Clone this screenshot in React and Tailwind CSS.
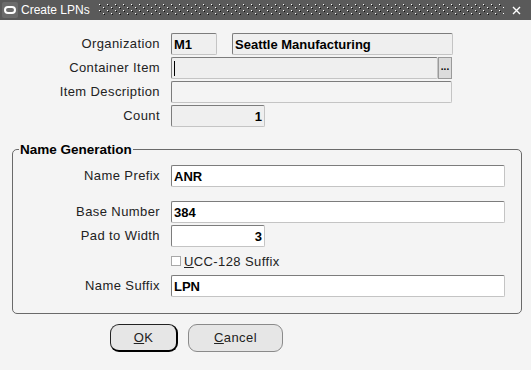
import React from 'react';

const font = { fontFamily: '"Liberation Sans", Arial, sans-serif' };

function Field({ value = '', width, bg = 'bg-[#efefef]', align = 'text-left', caret = false, children }) {
  return (
    <div
      className={`h-[22px] ${width} ${bg} ${align} flex items-center border border-t-[#7c7c7c] border-l-[#7c7c7c] border-r-[#c4c4c4] border-b-[#c4c4c4] rounded-[2px] px-[2px] text-[13px] font-bold text-black leading-none ${align === 'text-right' ? 'justify-end' : ''}`}
    >
      {caret && <span className="w-px h-[15px] bg-black" />}
      {value}
      {children}
    </div>
  );
}

function Row({ label, labelW = 'w-[160px]', children, className = '' }) {
  return (
    <div className={`flex items-center ${className}`}>
      <div className={`${labelW} text-right text-[13px] tracking-[0.4px] text-[#222] whitespace-nowrap`}>{label}</div>
      <div className="ml-[11px] flex">{children}</div>
    </div>
  );
}

function TitleDots() {
  return (
    <svg className="flex-1 h-[12px]" preserveAspectRatio="none">
      <defs>
        <pattern id="dots" width="8" height="6" patternUnits="userSpaceOnUse">
          <rect x="0" y="0" width="1" height="1" fill="#ffffff" />
          <rect x="1" y="1" width="1" height="1" fill="#111111" />
          <rect x="4" y="3" width="1" height="1" fill="#ffffff" />
          <rect x="5" y="4" width="1" height="1" fill="#111111" />
        </pattern>
      </defs>
      <rect width="100%" height="100%" fill="url(#dots)" />
    </svg>
  );
}

export default function App() {
  return (
    <div className="w-[531px] h-[370px] bg-[#f4f4f4] overflow-hidden" style={font}>
      {/* Title bar */}
      <div className="h-[20px] bg-[#5a5a5a] flex items-center pl-[2px] pr-[10px]">
        <div className="w-[16px] h-[16px] bg-[#6c6c6c] rounded-[2px] flex items-center justify-center">
          <div className="w-[12px] h-[8px] rounded-full border-2 border-white" />
        </div>
        <span className="ml-[3px] text-white text-[12px] leading-none">Create LPNs</span>
        <div className="ml-[9px] mr-[8px] flex-1 flex items-center">
          <TitleDots />
        </div>
        <svg width="9" height="9" viewBox="0 0 9 9">
          <path d="M1 1 L8 8 M8 1 L1 8" stroke="#fff" strokeWidth="1.4" />
        </svg>
      </div>

      {/* Header fields */}
      <div className="pt-[13px] flex flex-col gap-[2px]">
        <Row label="Organization">
          <Field value="M1" width="w-[46px]" />
          <div className="ml-[15px]">
            <Field value="Seattle Manufacturing" width="w-[221px]" />
          </div>
        </Row>
        <Row label="Container Item">
          <Field caret width="w-[267px]" />
          <div className="h-[22px] w-[14px] bg-[#dcdcdc] border border-[#9a9a9a] flex items-center justify-center text-[10px] font-bold leading-none pb-[2px]">
            ...
          </div>
        </Row>
        <Row label="Item Description">
          <Field width="w-[281px]" bg="bg-[#f4f4f4]" />
        </Row>
        <Row label="Count">
          <Field value="1" width="w-[94px]" align="text-right" />
        </Row>
      </div>

      {/* Name Generation group */}
      <fieldset className="ml-[12px] mt-[15px] w-[510px] h-[172px] border border-[#6a6a6a] rounded-[5px] px-0 pt-[8px]">
        <legend className="ml-[6px] px-[1px] text-[13.5px] font-bold text-black leading-[15px]">Name Generation</legend>
        <div className="flex flex-col">
          <Row label="Name Prefix" labelW="w-[147px]">
            <Field value="ANR" width="w-[334px]" bg="bg-white" />
          </Row>
          <Row label="Base Number" labelW="w-[147px]" className="mt-[14px]">
            <Field value="384" width="w-[334px]" bg="bg-white" />
          </Row>
          <Row label="Pad to Width" labelW="w-[147px]" className="mt-[2px]">
            <Field value="3" width="w-[94px]" bg="bg-white" align="text-right" />
          </Row>
          <div className="flex items-center mt-[8px] ml-[158px] h-[12px]">
            <div className="w-[10px] h-[10px] bg-white border border-[#a8a8a8]" />
            <span className="ml-[3px] text-[13px] tracking-[0.4px] text-[#222] leading-none">
              <span className="underline">U</span>CC-128 Suffix
            </span>
          </div>
          <Row label="Name Suffix" labelW="w-[147px]" className="mt-[8px]">
            <Field value="LPN" width="w-[334px]" bg="bg-white" />
          </Row>
        </div>
      </fieldset>

      {/* Buttons */}
      <div className="flex ml-[110px] mt-[10px] gap-[10px]">
        <button className="w-[68px] h-[28px] rounded-[9px] bg-[#e6e6e6] border border-[#222] border-r-2 border-b-2 border-r-black border-b-black text-[13px] tracking-[0.4px] text-[#222]">
          <span className="underline">O</span>K
        </button>
        <button className="w-[95px] h-[28px] rounded-[9px] bg-[#e6e6e6] border border-[#8a8a8a] text-[13px] tracking-[0.4px] text-[#222]">
          <span className="underline">C</span>ancel
        </button>
      </div>
    </div>
  );
}
